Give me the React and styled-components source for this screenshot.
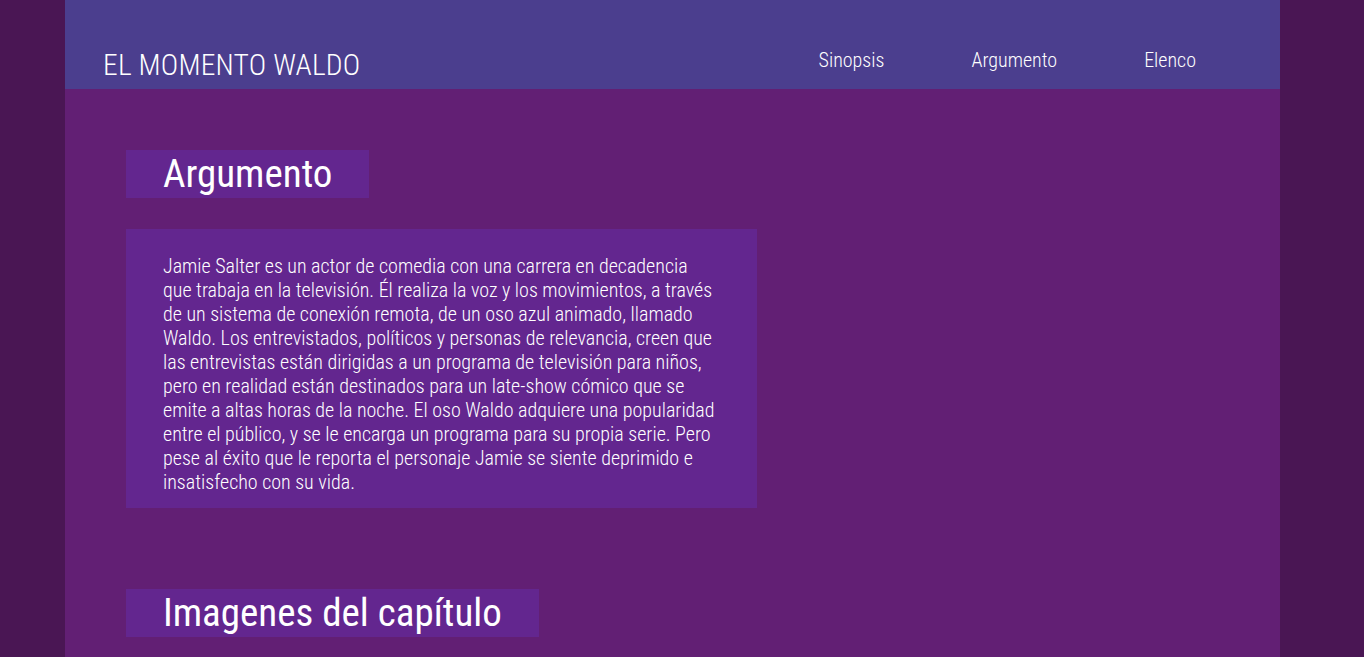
import React from 'react';
import styled, { createGlobalStyle } from 'styled-components';

const GlobalStyle = createGlobalStyle`
    html, body {
        margin: 0;
        padding: 0;
        background-color: #4a1654;
    }
    html {
        overflow-y: scroll;
    }
    body {
        font-family: "Roboto Condensed", Roboto, "Liberation Sans", sans-serif;
        font-weight: 300;
        color: #fff;
    }
`;

const Page = styled.div`
    width: 1215px;
    min-height: 1200px;
    margin: 0 67px 0 65px;
    background-color: #621f74;
`;
const Header = styled.header`
    display: flex;
    align-items: flex-end;
    justify-content: space-between;
    height: 89px;
    padding: 0 84px 0 38px;
    box-sizing: border-box;
    background-color: #4b3e8e;
`;
const Logo = styled.h1`
    margin: 0 0 7px;
    font-size: 29.5px;
    font-weight: 300;
    letter-spacing: 0.2px;
`;
const Nav = styled.nav`
    display: flex;
    gap: 87px;
    margin-bottom: 17px;
`;
const NavLink = styled.a`
    font-size: 20px;
    color: #fff;
    text-decoration: none;
`;
const Main = styled.main`
    padding: 61px 61px 0;
`;
const Section = styled.section`
    margin-bottom: 81px;
`;
const Title = styled.h2`
    display: inline-block;
    height: 48px;
    margin: 0;
    padding: 0 37px;
    background-color: #63268f;
    font-size: 39px;
    font-weight: 400;
    line-height: 48px;
`;
const Card = styled.div`
    width: 631px;
    margin-top: 31px;
    padding: 25px 37px 14px;
    box-sizing: border-box;
    background-color: #63268f;
`;
const Text = styled.p`
    margin: 0;
    font-size: 20px;
    line-height: 24px;
`;

export default function App() {
    return (
        <>
            <GlobalStyle />
            <Page>
                <Header>
                    <Logo>EL MOMENTO WALDO</Logo>
                    <Nav>
                        <NavLink href="#sinopsis">Sinopsis</NavLink>
                        <NavLink href="#argumento">Argumento</NavLink>
                        <NavLink href="#elenco">Elenco</NavLink>
                    </Nav>
                </Header>
                <Main>
                    <Section>
                        <Title>Argumento</Title>
                        <Card>
                            <Text>
                                Jamie Salter es un actor de comedia con una carrera en decadencia que trabaja en la televisión. Él realiza la voz y los movimientos, a través de un sistema de conexión remota, de un oso azul animado, llamado Waldo. Los entrevistados, políticos y personas de relevancia, creen que las entrevistas están dirigidas a un programa de televisión para niños, pero en realidad están destinados para un late-show cómico que se emite a altas horas de la noche. El oso Waldo adquiere una popularidad entre el público, y se le encarga un programa para su propia serie. Pero pese al éxito que le reporta el personaje Jamie se siente deprimido e insatisfecho con su vida.
                            </Text>
                        </Card>
                    </Section>
                    <Section>
                        <Title>Imagenes del capítulo</Title>
                    </Section>
                </Main>
            </Page>
        </>
    );
}
